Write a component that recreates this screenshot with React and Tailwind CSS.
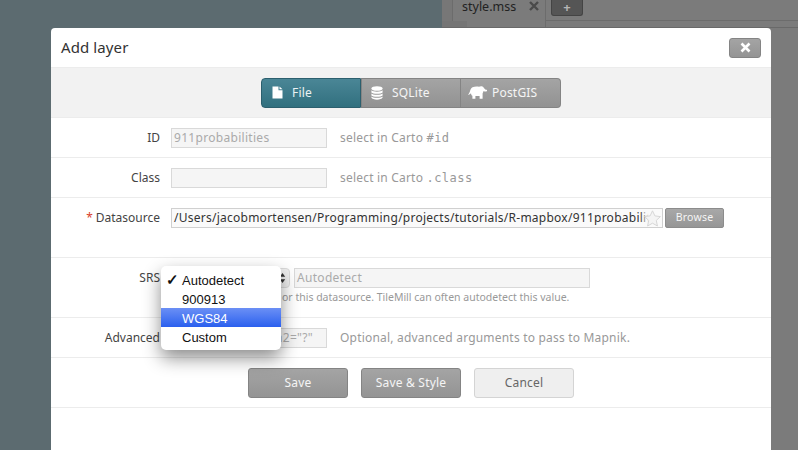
import React from "react";

const sans = "font-['Noto_Sans','Open_Sans',sans-serif]";
const mono = "font-['DejaVu_Sans_Mono','Liberation_Mono',monospace]";

function FileIcon() {
  return (
    <svg width="11" height="13" viewBox="0 0 11 13" className="block">
      <path d="M0.5 0.5H6.5V4.2H10.5V12.5H0.5Z M7.5 0.5L10.5 3.2H7.5Z" fill="#fff" />
    </svg>
  );
}
function DbIcon() {
  return (
    <svg width="12" height="14" viewBox="0 0 12 14" className="block">
      <ellipse cx="6" cy="2.5" rx="5.6" ry="2.3" fill="#fff" />
      <path d="M0.4 4.2C1.5 6.1 10.5 6.1 11.6 4.2V6.4C10.5 8.3 1.5 8.3 0.4 6.4Z" fill="#fff" />
      <path d="M0.4 7.4C1.5 9.3 10.5 9.3 11.6 7.4V9.4C10.5 11.3 1.5 11.3 0.4 9.4Z" fill="#fff" />
      <path d="M0.4 10.4C1.5 12.3 10.5 12.3 11.6 10.4V11.6C10.5 14.4 1.5 14.4 0.4 11.6Z" fill="#fff" />
    </svg>
  );
}
function ElephantIcon() {
  return (
    <svg width="19" height="13" viewBox="0 0 19 13" className="block">
      <path d="M4.5 1.2C6.5 0.4 9.5 0.4 11 0.8C12 0 14.5 -0.1 15.4 1.2C16 2.2 16.6 3 17.4 3.6C17.9 4 18.5 4 19 3.6V5C18 5.8 16.6 5.6 15.6 5C15.3 6 14.9 6.8 14.6 7.6V12.8H11.6V10H7.4V12.8H4.4V9.8C3.4 9.4 3.1 8.2 3 7.2C2.4 7.8 1.2 8.8 0 8.8C0.6 7.8 1.4 7 1.9 5.4C2.4 3.6 3 1.9 4.5 1.2Z" fill="#fff" />
    </svg>
  );
}
function Star() {
  return (
    <svg width="17" height="17" viewBox="0 0 17 17" className="absolute right-[1px] top-[1px]">
      <path d="M8.5 0.8L10.9 5.9L16.4 6.6L12.3 10.4L13.4 16L8.5 13.2L3.6 16L4.7 10.4L0.6 6.6L6.1 5.9Z" fill="#f4f4f4" stroke="#d6d6d6" strokeWidth="1" />
    </svg>
  );
}

function Tab({ active, children, className = "" }) {
  return (
    <div
      className={`flex h-[30px] w-[100px] items-center text-[12px] tracking-[0.2px] text-white/90 ${className} ${
        active
          ? "bg-gradient-to-b from-[#4a8696] to-[#31707f] border border-[#2c5f6e]"
          : "bg-gradient-to-b from-[#a4a4a4] to-[#929292] border border-[#848484]"
      }`}
    >
      {children}
    </div>
  );
}

function Row({ h, label, required, children }) {
  return (
    <div className={`flex border-b border-[#ececec] ${h}`}>
      <div className="w-[109px] shrink-0 pt-[11px] text-right text-[12px] leading-[18px] text-[#444]">
        {required && <span className="mr-[3px] text-[#d9412b]">*</span>}
        {label}
      </div>
      <div className="ml-[11px] flex-1 pt-[10px]">{children}</div>
    </div>
  );
}

function Field({ className = "", children }) {
  return (
    <div className={`h-[20px] w-[156px] overflow-hidden whitespace-nowrap border border-[#d9d9d9] bg-[#f5f5f5] px-[2px] text-[12px] leading-[18px] tracking-[0.3px] text-[#aaa] ${className}`}>
      {children}
    </div>
  );
}

function Hint({ children }) {
  return <span className="ml-[13px] text-[12px] leading-[18px] tracking-[0.2px] text-[#999]">{children}</span>;
}

function ActionBtn({ children, light }) {
  return (
    <div
      className={`flex h-[30px] w-[100px] items-center justify-center rounded-[3px] border text-[12px] tracking-[0.2px] ${
        light
          ? "border-[#d4d4d4] bg-[#efefef] text-[#666]"
          : "border-[#848484] bg-gradient-to-b from-[#a4a4a4] to-[#949494] text-white/90"
      }`}
    >
      {children}
    </div>
  );
}

export default function App() {
  return (
    <div className={`relative flex h-[450px] w-[798px] overflow-hidden bg-[#5c6b70] ${sans}`}>
      <div className="w-[442px] shrink-0" />
      <div className="flex-1 bg-[#7b7b7b]">
        <div className="flex h-[28px] border-b border-[#696969]">
          <div className="h-[21px] w-[11px] border-r border-[#6c6c6c] bg-[#777]" />
          <div className="flex h-[27px] w-[93px] items-start border-r border-[#6c6c6c] pl-[9px] text-[12.5px] leading-[13px] text-[#222]">
            <span>style.mss</span>
            <svg width="10" height="10" viewBox="0 0 10 10" className="ml-[13px] mt-[1px]">
              <path d="M1 1L9 9M9 1L1 9" stroke="#4a4a4a" strokeWidth="2.4" />
            </svg>
          </div>
          <div className="h-[21px] flex-1 border-b border-[#6c6c6c] pl-[5px]">
            <div className="flex h-[16px] w-[32px] items-center justify-center rounded-b-[3px] border border-t-0 border-[#444] bg-[#555] text-[13px] leading-none font-bold text-[#b5b5b5]">
              +
            </div>
          </div>
        </div>
      </div>
      <div className="absolute left-[442px] top-[21px] h-[6px] w-[25px] bg-[#757575]" />

      <div className="absolute left-[51px] top-[28px] h-[430px] w-[720px] rounded-t-[4px] bg-white">
        <div className="flex h-[40px] items-center justify-between border-b border-[#ececec] pl-[10px] pr-[10px]">
          <span className="text-[15px] tracking-[0.1px] text-[#333]">Add layer</span>
          <div className="flex h-[20px] w-[32px] items-center justify-center rounded-[3px] border border-[#848484] bg-gradient-to-b from-[#a4a4a4] to-[#949494]">
            <svg width="11" height="11" viewBox="0 0 11 11">
              <path d="M1.5 1.5L9.5 9.5M9.5 1.5L1.5 9.5" stroke="#fff" strokeWidth="2.6" />
            </svg>
          </div>
        </div>

        <div className="flex h-[50px] items-center justify-center border-b border-[#ececec] bg-[#f2f2f2]">
          <Tab active className="rounded-l-[4px] pl-[10px]">
            <FileIcon />
            <span className="ml-[9px]">File</span>
          </Tab>
          <Tab className="pl-[9px]">
            <DbIcon />
            <span className="ml-[9px]">SQLite</span>
          </Tab>
          <Tab className="rounded-r-[4px] border-l-0 pl-[7px]">
            <ElephantIcon />
            <span className="ml-[5px]">PostGIS</span>
          </Tab>
        </div>

        <Row h="h-[40px]" label="ID">
          <div className="flex items-center">
            <Field>911probabilities</Field>
            <Hint>
              select in Carto <span className={`${mono} text-[12px] tracking-[0.5px]`}>#id</span>
            </Hint>
          </div>
        </Row>
        <Row h="h-[40px]" label="Class">
          <div className="flex items-center">
            <Field />
            <Hint>
              select in Carto <span className={`${mono} text-[12px] tracking-[0.5px]`}>.class</span>
            </Hint>
          </div>
        </Row>
        <Row h="h-[60px]" label="Datasource" required>
          <div className="flex items-start">
            <div className="relative h-[20px] w-[492px] overflow-hidden whitespace-nowrap border border-[#d0d0d0] bg-[#fafafa] px-[2px] text-[12px] leading-[18px] tracking-[0.25px] text-[#333]">
              /Users/jacobmortensen/Programming/projects/tutorials/R-mapbox/911probabilities
              <div className="absolute right-0 top-0 h-full w-[22px] bg-gradient-to-r from-transparent to-[#fafafa] to-40%" />
              <Star />
            </div>
            <div className="ml-[2px] flex h-[20px] w-[59px] items-center justify-center rounded-[2px] border border-[#8c8c8c] bg-gradient-to-b from-[#a8a8a8] to-[#969696] text-[10.5px] tracking-[0.2px] text-white/90">
              Browse
            </div>
          </div>
        </Row>
        <Row h="h-[60px]" label="SRS">
          <div className="flex items-start">
            <div className="flex h-[20px] w-[119px] items-center justify-end rounded-[4px] border border-[#dcdcdc] bg-[#f0f0f0] pr-[3px]">
              <svg width="7" height="12" viewBox="0 0 7 12">
                <path d="M3.5 1L6.2 4.8H0.8Z M3.5 11L0.8 7.2H6.2Z" fill="#333" />
              </svg>
            </div>
            <Field className="ml-[4px] w-[296px]">Autodetect</Field>
          </div>
          <div className="ml-[111px] mt-[1px] text-[10.5px] leading-[16px] text-[#999]">
            or this datasource. TileMill can often autodetect this value.
          </div>
        </Row>
        <Row h="h-[40px]" label="Advanced">
          <div className="flex items-center">
            <Field className="pr-[13px] text-right">param2="?"</Field>
            <Hint>Optional, advanced arguments to pass to Mapnik.</Hint>
          </div>
        </Row>

        <div className="flex h-[50px] items-center justify-center gap-[13px] border-b border-[#ececec]">
          <ActionBtn>Save</ActionBtn>
          <ActionBtn>Save &amp; Style</ActionBtn>
          <ActionBtn light>Cancel</ActionBtn>
        </div>
      </div>

      <div className="absolute left-[161px] top-[266px] w-[120px] rounded-[5px] bg-white py-[4px] font-['Liberation_Sans',sans-serif] text-[13px] leading-[21px] text-[#111] shadow-[0_8px_18px_rgba(0,0,0,0.45)]">
        <div className="relative h-[19px] pl-[21px]">
          <span className="absolute left-[5px] top-[-1px] text-[15px] font-bold">✓</span>
          Autodetect
        </div>
        <div className="h-[19px] pl-[21px]">900913</div>
        <div className="h-[19px] bg-gradient-to-b from-[#6b8ff5] to-[#2a5fee] pl-[21px] text-white">WGS84</div>
        <div className="h-[19px] pl-[21px]">Custom</div>
      </div>
    </div>
  );
}
